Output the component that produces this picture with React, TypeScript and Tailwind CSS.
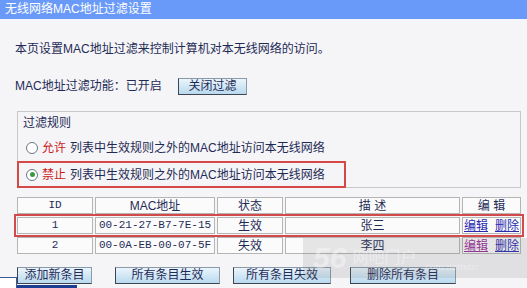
export default function App() {
  const font = "font-['Liberation_Sans','Noto_Sans_CJK_SC',sans-serif]"
  const btn =
    'h-[17px] text-[12px] leading-[15px] text-[#1f2b55] text-center bg-gradient-to-b from-[#eaf5fd] to-[#b9d9ee] border border-[#8a9aa8] border-l-[#3d4650] border-b-[#3d4650]'
  const cell =
    'h-[17px] border border-[#b5b5b5] bg-[#fbfbfc] flex items-center justify-center leading-none whitespace-nowrap overflow-hidden'
  const txt = 'text-[12px]'
  const mono = "font-['Liberation_Mono',monospace] text-[11px]"
  const cols = 'grid grid-cols-[76px_120px_66px_175px_59px] gap-x-[2px]'

  return (
    <div className={`relative w-[527px] h-[288px] overflow-hidden bg-[#f5f5f8] text-[#1f2b55] ${font}`}>
      {/* title bar */}
      <div className="h-[19px] bg-[#6a9af9] pl-[5px] text-white text-[12px] leading-[19px]">
        无线网络MAC地址过滤设置
      </div>

      <div className="mt-[22px] pl-[15px] text-[12px] leading-[16px]">
        本页设置MAC地址过滤来控制计算机对本无线网络的访问。
      </div>

      <div className="mt-[20px] pl-[15px] flex items-center text-[12px]">
        <span className="w-[163px]">MAC地址过滤功能：已开启</span>
        <button className={`${btn} w-[69px]`}>关闭过滤</button>
      </div>

      {/* filter rules */}
      <div className="mt-[16px] ml-[17px] w-[504px] h-[77px] border border-[#c8c8c8] flex flex-col">
        <div className="pt-[3px] pl-[5px] text-[12px] leading-[16px]">过滤规则</div>
        <div className="mt-[7px] h-[20px] flex items-center pl-[8px] text-[12px]">
          <span className="w-[12px] h-[12px] rounded-full border border-[#6b7683] bg-white" />
          <span className="ml-[4px] text-[#cc1a1a]">允许</span>
          <span className="ml-[4px]">列表中生效规则之外的MAC地址访问本无线网络</span>
        </div>
        <div className="mt-auto -ml-px -mb-px w-[329px] h-[27px] border-2 border-[#d54848] flex items-center pl-[7px] text-[12px]">
          <span className="w-[12px] h-[12px] rounded-full border border-[#6b7683] bg-white flex items-center justify-center">
            <span className="w-[5px] h-[5px] rounded-full bg-[#3c9a3c]" />
          </span>
          <span className="ml-[4px] text-[#cc1a1a]">禁止</span>
          <span className="ml-[4px]">列表中生效规则之外的MAC地址访问本无线网络</span>
        </div>
      </div>

      {/* table */}
      <div className="mt-[9px] ml-[17px] w-[504px] flex flex-col gap-y-[3px]">
        <div className={cols}>
          <div className={`${cell} ${mono}`}>ID</div>
          <div className={`${cell} ${txt}`}>MAC地址</div>
          <div className={`${cell} ${txt}`}>状态</div>
          <div className={`${cell} ${txt}`}>描 述</div>
          <div className={`${cell} ${txt}`}>编 辑</div>
        </div>
        <div className={`${cols} outline-2 outline-[#d24a4a] outline-offset-[1px]`}>
          <div className={`${cell} ${mono}`}>1</div>
          <div className={`${cell} ${mono}`}>00-21-27-B7-7E-15</div>
          <div className={`${cell} ${txt}`}>生效</div>
          <div className={`${cell} ${txt}`}>张三</div>
          <div className={`${cell} ${txt} gap-[7px]`}>
            <a className="underline text-[#2a2ab0]">编辑</a>
            <a className="underline text-[#2a2ab0]">删除</a>
          </div>
        </div>
        <div className={cols}>
          <div className={`${cell} ${mono}`}>2</div>
          <div className={`${cell} ${mono}`}>00-0A-EB-00-07-5F</div>
          <div className={`${cell} ${txt}`}>失效</div>
          <div className={`${cell} ${txt}`}>李四</div>
          <div className={`${cell} ${txt} gap-[7px]`}>
            <a className="underline text-[#9b2f9b]">编辑</a>
            <a className="underline text-[#2a2ab0]">删除</a>
          </div>
        </div>
      </div>

      {/* buttons */}
      <div className="mt-[13px] ml-[17px] flex">
        <button className={`${btn} w-[75px]`}>添加新条目</button>
        <button className={`${btn} w-[105px] ml-[23px]`}>所有条目生效</button>
        <button className={`${btn} w-[98px] ml-[13px]`}>所有条目失效</button>
        <button className={`${btn} w-[106px] ml-[19px]`}>删除所有条目</button>
      </div>

      {/* watermark */}
      <div className="absolute left-[303px] top-[238px] w-[224px] h-[40px] bg-[#6e6e6e]/15 flex items-center pl-[10px] gap-[6px] text-white/40 pointer-events-none">
        <span className="font-['Liberation_Sans',sans-serif] italic font-bold text-[30px] leading-none">56</span>
        <span className="text-[16px] leading-none">网吧门户</span>
        <span className="font-['Liberation_Serif',serif] italic text-[11px] self-end mb-[4px]">.com/netbar/</span>
      </div>

      {/* screenshot artifact, bottom-left */}
      <div className="absolute left-0 top-[277px] w-[17px] h-[11px] bg-white border-t border-r border-[#3a5a9a]" />
      <div className="absolute left-[17px] top-[285px] w-[60px] h-[3px] bg-[#1c3f94]" />
    </div>
  )
}
